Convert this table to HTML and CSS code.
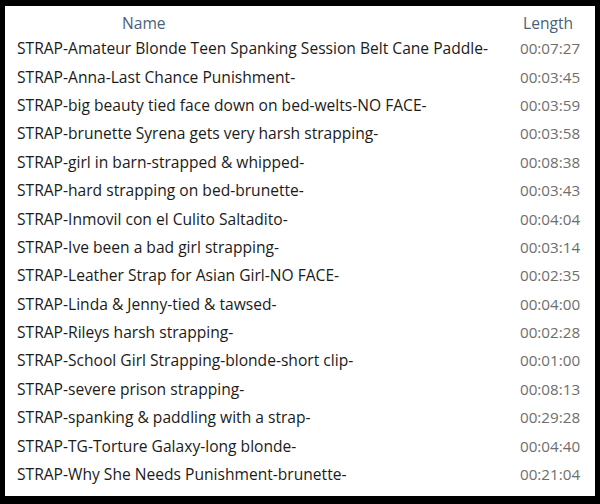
FILE: index.html
```html
<!DOCTYPE html>
<html>
<head>
<meta charset="utf-8">
<link rel="stylesheet" href="styles.css">
</head>
<body>
<div class="frame">
  <div class="list">
    <div class="head name-h">Name</div><div class="head len-h">Length</div>
    <div class="name">STRAP-Amateur Blonde Teen Spanking Session Belt Cane Paddle-</div><div class="len">00:07:27</div>
    <div class="name">STRAP-Anna-Last Chance Punishment-</div><div class="len">00:03:45</div>
    <div class="name">STRAP-big beauty tied face down on bed-welts-NO FACE-</div><div class="len">00:03:59</div>
    <div class="name">STRAP-brunette Syrena gets very harsh strapping-</div><div class="len">00:03:58</div>
    <div class="name">STRAP-girl in barn-strapped &amp; whipped-</div><div class="len">00:08:38</div>
    <div class="name">STRAP-hard strapping on bed-brunette-</div><div class="len">00:03:43</div>
    <div class="name">STRAP-Inmovil con el Culito Saltadito-</div><div class="len">00:04:04</div>
    <div class="name">STRAP-Ive been a bad girl strapping-</div><div class="len">00:03:14</div>
    <div class="name">STRAP-Leather Strap for Asian Girl-NO FACE-</div><div class="len">00:02:35</div>
    <div class="name">STRAP-Linda &amp; Jenny-tied &amp; tawsed-</div><div class="len">00:04:00</div>
    <div class="name">STRAP-Rileys harsh strapping-</div><div class="len">00:02:28</div>
    <div class="name">STRAP-School Girl Strapping-blonde-short clip-</div><div class="len">00:01:00</div>
    <div class="name">STRAP-severe prison strapping-</div><div class="len">00:08:13</div>
    <div class="name">STRAP-spanking &amp; paddling with a strap-</div><div class="len">00:29:28</div>
    <div class="name">STRAP-TG-Torture Galaxy-long blonde-</div><div class="len">00:04:40</div>
    <div class="name">STRAP-Why She Needs Punishment-brunette-</div><div class="len">00:21:04</div>
  </div>
</div>
</body>
</html>
```
FILE: styles.css
```css
html, body {
  margin: 0;
  padding: 0;
  background: #000;
}
.frame {
  width: 590px;
  height: 490px;
  margin: 6px 0 0 5px;
  background: #fff;
  box-sizing: border-box;
}
.list {
  display: grid;
  grid-template-columns: 510px 80px;
  grid-template-rows: 28px repeat(16, 28.4px);
  font-family: "Open Sans", "Noto Sans", sans-serif;
  font-size: 15.6px;
  align-items: center;
}
.head {
  color: #4b5f7c;
  padding-top: 6px;
}
.name-h {
  padding-left: 117px;
}
.len-h {
  padding-left: 8px;
}
.name {
  color: #1b1b1b;
  padding-left: 12px;
  white-space: nowrap;
}
.len {
  color: #6e6e6e;
  padding-left: 5px;
  font-size: 15.2px;
}
```
